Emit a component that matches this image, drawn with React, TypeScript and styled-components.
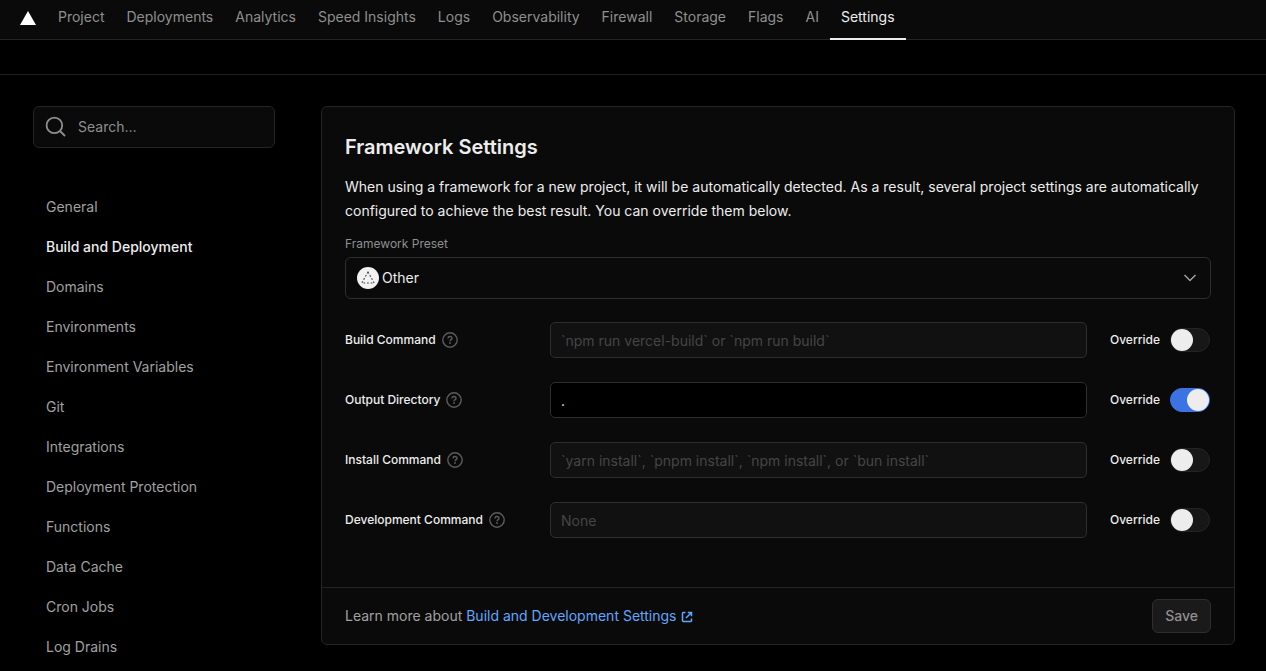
import React, { useState } from "react";
import styled, { createGlobalStyle, css } from "styled-components";

const GlobalStyle = createGlobalStyle`
  *, *::before, *::after { box-sizing: border-box; }
  html { background: #000; }
  body {
    margin: 0;
    background: #000;
    color: #ededed;
    font-family: Inter, "Liberation Sans", sans-serif;
    font-size: 14px;
    line-height: 20px;
    -webkit-font-smoothing: antialiased;
  }
  h1, p, ul { margin: 0; padding: 0; }
  ul { list-style: none; }
  a { text-decoration: none; }
  button, input, select { font: inherit; color: inherit; margin: 0; }
`;

const TopBar = styled.header`
  display: flex;
  align-items: flex-start;
  height: 40px;
  padding-left: 20px;
  background: #0a0a0a;
  border-bottom: 1px solid #242424;
`;

const LogoLink = styled.a`
  display: flex;
  padding: 11px 11px 0 0;
`;

const Tabs = styled.nav`
  display: flex;
  height: 40px;
`;

const Tab = styled.a<{ $active?: boolean }>`
  padding: 7px 11px 0;
  white-space: nowrap;
  color: ${(p) => (p.$active ? "#ededed" : "#8f8f8f")};
  border-bottom: 2px solid ${(p) => (p.$active ? "#ededed" : "transparent")};
`;

const SubBar = styled.div`
  height: 35px;
  border-bottom: 1px solid #1f1f1f;
`;

const Page = styled.div`
  display: grid;
  grid-template-columns: 242px minmax(0, 1fr);
  column-gap: 46px;
  align-items: start;
  padding: 31px 31px 0 33px;
`;

const SearchBox = styled.label`
  display: flex;
  align-items: center;
  gap: 11px;
  height: 42px;
  padding: 0 11px;
  background: #0a0a0a;
  border: 1px solid #242424;
  border-radius: 6px;
`;

const SearchInput = styled.input`
  flex: 1;
  min-width: 0;
  padding: 0;
  background: transparent;
  border: 0;
  outline: none;
  &::placeholder { color: #8f8f8f; opacity: 1; }
`;

const SideList = styled.ul`
  margin-top: 39px;
`;

const SideLink = styled.a<{ $active?: boolean }>`
  display: block;
  padding: 10px 13px;
  color: ${(p) => (p.$active ? "#ededed" : "#a1a1a1")};
  font-weight: ${(p) => (p.$active ? 500 : 400)};
`;

const Card = styled.section`
  background: #0a0a0a;
  border: 1px solid #242424;
  border-radius: 6px;
`;

const CardBody = styled.div`
  padding: 24px 23px 49px;
`;

const Title = styled.h1`
  font-size: 20px;
  line-height: 32px;
  font-weight: 600;
`;

const Description = styled.p`
  margin-top: 12px;
  line-height: 24px;
`;

const PresetLabel = styled.label`
  display: block;
  margin-top: 13px;
  font-size: 12px;
  line-height: 16px;
  color: #8f8f8f;
`;

const SelectWrap = styled.div`
  position: relative;
  margin-top: 5px;
  > svg { position: absolute; top: 10px; pointer-events: none; }
  > svg:first-child { left: 12px; }
  > svg:last-child { right: 13px; }
`;

const Select = styled.select`
  appearance: none;
  display: block;
  width: 100%;
  height: 42px;
  padding: 0 36px;
  background: #0a0a0a;
  border: 1px solid #2e2e2e;
  border-radius: 6px;
`;

const Fields = styled.div`
  display: grid;
  row-gap: 24px;
  margin-top: 23px;
`;

const Field = styled.div`
  display: grid;
  grid-template-columns: 205px minmax(0, 1fr) auto;
  align-items: center;
`;

const smallStrong = css`
  font-size: 12px;
  line-height: 16px;
  font-weight: 500;
`;

const FieldName = styled.div`
  display: flex;
  align-items: center;
  gap: 6px;
  ${smallStrong}
`;

const HelpButton = styled.button`
  display: flex;
  padding: 0;
  background: none;
  border: 0;
`;

const TextInput = styled.input`
  width: 100%;
  height: 36px;
  padding: 0 10px;
  background: #000;
  border: 1px solid #2e2e2e;
  border-radius: 5px;
  &:disabled { background: #111; }
  &::placeholder { color: #454545; opacity: 1; }
`;

const Override = styled.label`
  display: flex;
  align-items: center;
  justify-content: space-between;
  width: 124px;
  padding: 0 1px 0 23px;
  ${smallStrong}
`;

const Toggle = styled.input`
  appearance: none;
  position: relative;
  width: 40px;
  height: 24px;
  background: #171717;
  border: 1px solid #242424;
  border-radius: 12px;
  &::before {
    content: "";
    position: absolute;
    top: 0;
    left: 0;
    width: 22px;
    height: 22px;
    border-radius: 50%;
    background: #ededed;
  }
  &:checked { background: #3b73e3; border-color: #3b73e3; }
  &:checked::before { left: 16px; }
`;

const CardFooter = styled.footer`
  display: flex;
  align-items: center;
  justify-content: space-between;
  padding: 11px 23px;
  border-top: 1px solid #242424;
  color: #a1a1a1;
`;

const DocsLink = styled.a`
  color: #62a6ff;
  svg { margin-left: 4px; vertical-align: -2px; }
`;

const SaveButton = styled.button`
  height: 34px;
  padding: 0 12px;
  background: #1a1a1a;
  border: 1px solid #2e2e2e;
  border-radius: 6px;
  color: #8f8f8f;
  font-weight: 500;
`;

const LogoMark = () => (
  <svg width="16" height="14" viewBox="0 0 16 14" aria-hidden="true">
    <path d="M8 0L16 14H0Z" fill="#fff" />
  </svg>
);

const SearchIcon = () => (
  <svg width="22" height="22" viewBox="0 0 22 22" fill="none" stroke="#8f8f8f" strokeWidth="1.8" aria-hidden="true">
    <circle cx="9.4" cy="9.4" r="7.8" />
    <path d="M15 15L20 20" />
  </svg>
);

const HelpIcon = () => (
  <svg width="16" height="16" viewBox="0 0 16 16" fill="none" stroke="#5c5c5c" strokeWidth="1.4" aria-hidden="true">
    <circle cx="8" cy="8" r="7.2" />
    <path d="M6 6.5V6.3A2 1.8 0 0 1 10 6.4C10 7.6 8 7.7 8 9.3" />
    <circle cx="8" cy="11" r="0.9" fill="#5c5c5c" stroke="none" />
  </svg>
);

const PresetIcon = () => (
  <svg width="22" height="22" viewBox="0 0 22 22" aria-hidden="true">
    <circle cx="11" cy="11" r="11" fill="#f2f2f2" />
    <path d="M11 5L17.2 16H4.8Z" fill="none" stroke="#444" strokeWidth="1.1" strokeDasharray="1.8 1.8" />
  </svg>
);

const ChevronIcon = () => (
  <svg width="16" height="22" viewBox="0 0 16 22" fill="none" stroke="#a1a1a1" strokeWidth="1.5" aria-hidden="true">
    <path d="M2.5 8L8 13.5L13.5 8" />
  </svg>
);

const ExternalIcon = () => (
  <svg width="12" height="12" viewBox="0 0 12 12" fill="none" stroke="currentColor" strokeWidth="1.5" aria-hidden="true">
    <path d="M4.5 1.5H2.2Q1.5 1.5 1.5 2.2V9.8Q1.5 10.5 2.2 10.5H9.8Q10.5 10.5 10.5 9.8V7.5" />
    <path d="M6.8 1.5H10.5V5.2M10.5 1.5L5 7" />
  </svg>
);

const tabs = ["Project", "Deployments", "Analytics", "Speed Insights", "Logs", "Observability", "Firewall", "Storage", "Flags", "AI", "Settings"];

const sections = [
  "General", "Build and Deployment", "Domains", "Environments", "Environment Variables", "Git",
  "Integrations", "Deployment Protection", "Functions", "Data Cache", "Cron Jobs", "Log Drains",
];

const commands = [
  { id: "build", name: "Build Command", hint: "`npm run vercel-build` or `npm run build`", value: "", on: false },
  { id: "output", name: "Output Directory", hint: "", value: ".", on: true },
  { id: "install", name: "Install Command", hint: "`yarn install`, `pnpm install`, `npm install`, or `bun install`", value: "", on: false },
  { id: "dev", name: "Development Command", hint: "None", value: "", on: false },
];

function CommandField({ id, name, hint, value, on }: (typeof commands)[number]) {
  const [enabled, setEnabled] = useState(on);
  return (
    <Field>
      <FieldName>
        <label htmlFor={id}>{name}</label>
        <HelpButton type="button" aria-label={`About ${name}`}><HelpIcon /></HelpButton>
      </FieldName>
      <TextInput id={id} type="text" placeholder={hint} defaultValue={value} disabled={!enabled} />
      <Override>
        Override
        <Toggle type="checkbox" checked={enabled} onChange={(e) => setEnabled(e.target.checked)} />
      </Override>
    </Field>
  );
}

export default function App() {
  return (
    <>
      <GlobalStyle />
      <TopBar>
        <LogoLink href="#" aria-label="Home"><LogoMark /></LogoLink>
        <Tabs>
          {tabs.map((t) => <Tab key={t} href="#" $active={t === "Settings"}>{t}</Tab>)}
        </Tabs>
      </TopBar>
      <SubBar />
      <Page>
        <aside>
          <SearchBox>
            <SearchIcon />
            <SearchInput type="search" placeholder="Search…" aria-label="Search" />
          </SearchBox>
          <SideList>
            {sections.map((s) => (
              <li key={s}><SideLink href="#" $active={s === "Build and Deployment"}>{s}</SideLink></li>
            ))}
          </SideList>
        </aside>
        <main>
          <Card>
            <CardBody>
              <Title>Framework Settings</Title>
              <Description>
                When using a framework for a new project, it will be automatically detected. As a result, several project settings are automatically configured to achieve the best result. You can override them below.
              </Description>
              <PresetLabel htmlFor="preset">Framework Preset</PresetLabel>
              <SelectWrap>
                <PresetIcon />
                <Select id="preset"><option>Other</option></Select>
                <ChevronIcon />
              </SelectWrap>
              <Fields>
                {commands.map((c) => <CommandField key={c.id} {...c} />)}
              </Fields>
            </CardBody>
            <CardFooter>
              <p>
                Learn more about <DocsLink href="#">Build and Development Settings<ExternalIcon /></DocsLink>
              </p>
              <SaveButton type="button">Save</SaveButton>
            </CardFooter>
          </Card>
        </main>
      </Page>
    </>
  );
}
